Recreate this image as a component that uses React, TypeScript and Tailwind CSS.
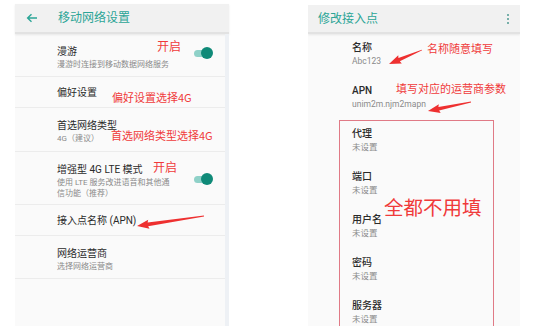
import type { ReactNode } from 'react';

const FONT = 'Roboto, "Noto Sans CJK SC", "Noto Sans", sans-serif';
const NOTE_FONT = '"Noto Sans CJK SC", sans-serif';

// tapered red arrow from tail to head
function arrowPoints(tx: number, ty: number, hx: number, hy: number) {
  const len = Math.hypot(hx - tx, hy - ty);
  const dx = (hx - tx) / len;
  const dy = (hy - ty) / len;
  const nx = -dy;
  const ny = dx;
  const headLen = 11;
  const nkx = hx - dx * headLen;
  const nky = hy - dy * headLen;
  const pts: [number, number][] = [
    [tx + nx * 0.4, ty + ny * 0.4],
    [nkx + nx * 1.8, nky + ny * 1.8],
    [nkx + nx * 4.5 - dx * 1, nky + ny * 4.5 - dy * 1],
    [hx, hy],
    [nkx - nx * 4.5 - dx * 1, nky - ny * 4.5 - dy * 1],
    [nkx - nx * 1.8, nky - ny * 1.8],
    [tx - nx * 0.4, ty - ny * 0.4],
  ];
  return pts.map((p) => p.join(',')).join(' ');
}

function Toggle() {
  return (
    <div className="relative w-[19px] h-[12px] flex items-center">
      <div className="h-[7px] w-[17px] rounded-full bg-[#8fd1c8]" />
      <div className="absolute right-0 top-0 h-[12px] w-[12px] rounded-full bg-[#0f8a78]" />
    </div>
  );
}

function Row({
  title,
  sub,
  h,
  center,
  right,
  subWidth,
}: {
  title: string;
  sub?: ReactNode;
  h: number;
  center?: boolean;
  right?: ReactNode;
  subWidth?: boolean;
}) {
  return (
    <div
      className={`shrink-0 flex border-b border-[#ececec] pl-[42px] pr-[12px] ${center ? 'items-center pt-[2px]' : 'pt-[12px]'}`}
      style={{ height: h }}
    >
      <div className={subWidth ? 'w-[118px]' : 'flex-1'}>
        <div className="text-[10px] leading-[12px] text-[#2a2a2a]">{title}</div>
        {sub && <div className="text-[8px] leading-[11px] text-[#8a8a8a] mt-[1px]">{sub}</div>}
      </div>
      {right && <div className="ml-auto pt-[1px]">{right}</div>}
    </div>
  );
}

function Field({ title, value, box }: { title: string; value: string; box?: boolean }) {
  return (
    <div className={`shrink-0 h-[43px] ${box ? 'pl-[12px] pt-[7px]' : 'pl-[44px] pt-[8px]'}`}>
      <div className="text-[10px] leading-[12px] text-[#2a2a2a] font-medium">{title}</div>
      <div className="text-[8.5px] leading-[12px] text-[#8a8a8a] mt-[1px]">{value}</div>
    </div>
  );
}

export default function App() {
  return (
    <div className="relative w-[543px] h-[326px] bg-white overflow-hidden flex" style={{ fontFamily: FONT }}>
      {/* left screen */}
      <div className="shrink-0 ml-[15px] mt-[4px] w-[214px] h-[322px] bg-[#fafafa] flex flex-col">
        <div className="shrink-0 h-[30px] bg-[#f1f1f1] flex items-center border-b-2 border-[#e2e2e2] shadow-[0_1px_2px_rgba(0,0,0,0.08)]">
          <svg width="12" height="10" viewBox="0 0 12 10" className="ml-[11px]">
            <path d="M11 5H2M5.5 1.2 1.6 5l3.9 3.8" stroke="#2ba596" strokeWidth="1.4" fill="none" />
          </svg>
          <span className="ml-[20px] text-[12px] text-[#2ba596]">移动网络设置</span>
        </div>
        <div className="flex-1 flex flex-col border-r-[4px] border-[#eef1f5]">
          <Row title="漫游" sub="漫游时连接到移动数据网络服务" h={43} right={<Toggle />} subWidth />
          <Row title="偏好设置" h={31} center />
          <Row title="首选网络类型" sub="4G（建议）" h={44} />
          <Row
            title="增强型 4G LTE 模式"
            sub="使用 LTE 服务改进语音和其他通信功能（推荐）"
            h={53}
            right={<div className="pt-[8px]"><Toggle /></div>}
            subWidth
          />
          <Row title="接入点名称 (APN)" h={31} center />
          <Row title="网络运营商" sub="选择网络运营商" h={43} />
        </div>
      </div>

      {/* right screen */}
      <div className="shrink-0 ml-[79px] mt-[5px] w-[212px] h-[321px] bg-[#fafafa] flex flex-col overflow-hidden">
        <div className="shrink-0 h-[29px] bg-[#f1f1f1] flex items-center justify-between border-b-2 border-[#e2e2e2] shadow-[0_1px_2px_rgba(0,0,0,0.08)]">
          <span className="ml-[10px] text-[12px] text-[#2ba596]">修改接入点</span>
          <div className="mr-[11px] flex flex-col gap-[2px]">
            <span className="block w-[2px] h-[2px] rounded-full bg-[#4f9a92]" />
            <span className="block w-[2px] h-[2px] rounded-full bg-[#4f9a92]" />
            <span className="block w-[2px] h-[2px] rounded-full bg-[#4f9a92]" />
          </div>
        </div>
        <Field title="名称" value="Abc123" />
        <Field title="APN" value="unim2m.njm2mapn" />
        <div className="shrink-0 ml-[31px] w-[155px] h-[240px] border border-[#e07a86] border-b-0">
          <Field title="代理" value="未设置" box />
          <Field title="端口" value="未设置" box />
          <Field title="用户名" value="未设置" box />
          <Field title="密码" value="未设置" box />
          <Field title="服务器" value="未设置" box />
        </div>
      </div>

      {/* annotations */}
      <div className="absolute inset-0 pointer-events-none text-[#f03a3a]" style={{ fontFamily: NOTE_FONT }}>
        <span className="absolute left-[157px] top-[40px] text-[12px] leading-none">开启</span>
        <span className="absolute left-[112px] top-[92px] text-[11px] leading-none">偏好设置选择4G</span>
        <span className="absolute left-[111px] top-[130px] text-[11px] leading-none">首选网络类型选择4G</span>
        <span className="absolute left-[153px] top-[161px] text-[12px] leading-none">开启</span>
        <span className="absolute left-[427px] top-[43px] text-[11px] leading-none">名称随意填写</span>
        <span className="absolute left-[396px] top-[83px] text-[11px] leading-none">填写对应的运营商参数</span>
        <span className="absolute left-[384px] top-[197px] text-[19.5px] leading-none">全都不用填</span>
        <svg className="absolute inset-0" width="543" height="326">
          <polygon points={arrowPoints(204, 216, 137, 226)} fill="#ee3030" />
          <polygon points={arrowPoints(422, 50, 389, 64)} fill="#ee3030" />
          <polygon points={arrowPoints(471, 102, 428, 111)} fill="#ee3030" />
        </svg>
      </div>
    </div>
  );
}
